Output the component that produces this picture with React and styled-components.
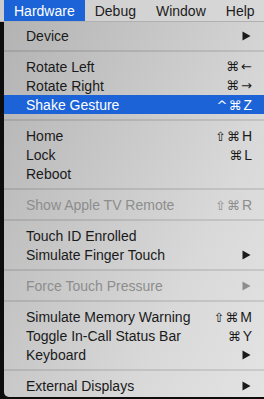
import React from "react";
import styled, { createGlobalStyle } from "styled-components";

const GlobalStyle = createGlobalStyle`
  html, body {
    margin: 0;
    padding: 0;
    background: #0d0d0d;
    overflow: hidden;
  }
  body {
    font-family: "Liberation Sans", Arial, "DejaVu Sans", sans-serif;
    -webkit-font-smoothing: antialiased;
  }
`;

const menuTitles = ["Hardware", "Debug", "Window", "Help"];

// null -> separator
const items = [
  { label: "Device", submenu: true },
  null,
  { label: "Rotate Left", mods: "⌘", key: "←" },
  { label: "Rotate Right", mods: "⌘", key: "→" },
  { label: "Shake Gesture", mods: "^⌘", key: "Z", active: true },
  null,
  { label: "Home", mods: "⇧⌘", key: "H" },
  { label: "Lock", mods: "⌘", key: "L" },
  { label: "Reboot" },
  null,
  { label: "Show Apple TV Remote", mods: "⇧⌘", key: "R", disabled: true },
  null,
  { label: "Touch ID Enrolled" },
  { label: "Simulate Finger Touch", submenu: true },
  null,
  { label: "Force Touch Pressure", submenu: true, disabled: true },
  null,
  { label: "Simulate Memory Warning", mods: "⇧⌘", key: "M" },
  { label: "Toggle In-Call Status Bar", mods: "⌘", key: "Y" },
  { label: "Keyboard", submenu: true },
  null,
  { label: "External Displays", submenu: true },
];

const isSymbol = (k) => k === "←" || k === "→";

function Arrow() {
  return (
    <ArrowIcon width="9" height="10" viewBox="0 0 9 10">
      <polygon points="0.5,0.5 8.5,5 0.5,9.5" fill="currentColor" />
    </ArrowIcon>
  );
}

export default function App() {
  return (
    <>
      <GlobalStyle />
      <Screen>
        <MenuBar>
          {menuTitles.map((t, i) => (
            <MenuTitle key={t} open={i === 0}>
              {t}
            </MenuTitle>
          ))}
        </MenuBar>

        <Dropdown>
          {items.map((item, i) =>
            item ? (
              <Item key={i} active={item.active} disabled={item.disabled}>
                <Label>{item.label}</Label>
                {item.key && (
                  <Shortcut>
                    <Mods>{item.mods}</Mods>
                    <Key symbol={isSymbol(item.key)}>{item.key}</Key>
                  </Shortcut>
                )}
                {item.submenu && <Arrow />}
              </Item>
            ) : (
              <Separator key={i} />
            )
          )}
        </Dropdown>
      </Screen>
    </>
  );
}

const Screen = styled.div`
  width: 264px;
  height: 399px;
  display: flex;
  flex-direction: column;
  background: #0d0d0d;
`;

const MenuBar = styled.div`
  display: flex;
  height: 22px;
  padding-left: 4px;
  background: linear-gradient(90deg, #cdcdcd, #d8d8d8);
  border-bottom: 1px solid #b0b0b0;
  box-sizing: border-box;
`;

const MenuTitle = styled.div`
  display: flex;
  align-items: center;
  padding: 0 10px;
  font-size: 14px;
  color: ${(p) => (p.open ? "#ffffff" : "#1c1c1c")};
  background: ${(p) => (p.open ? "#1c63d7" : "transparent")};
`;

const Dropdown = styled.div`
  margin-left: 4px;
  padding: 4px 0 2px;
  display: flex;
  flex-direction: column;
  border-bottom-left-radius: 5px;
  background: linear-gradient(115deg, #b3b3b3 0%, #c6c6c6 35%, #d9d9d9 70%, #e3e3e3 100%);
`;

const Item = styled.div`
  display: flex;
  align-items: center;
  height: 19px;
  padding: 0 12px 0 22px;
  font-size: 14px;
  color: ${(p) => (p.active ? "#ffffff" : p.disabled ? "#8d8d8d" : "#1a1a1a")};
  background: ${(p) => (p.active ? "#1c63d7" : "transparent")};
`;

const Label = styled.span`
  flex: 1;
  white-space: nowrap;
`;

const Shortcut = styled.span`
  display: flex;
  align-items: baseline;
  gap: 1px;
`;

const Mods = styled.span`
  font-family: "DejaVu Sans", sans-serif;
  font-size: 13px;
  letter-spacing: 1px;
`;

const Key = styled.span`
  font-family: ${(p) =>
    p.symbol ? `"DejaVu Sans", sans-serif` : `"Liberation Sans", sans-serif`};
  font-size: ${(p) => (p.symbol ? "13px" : "14px")};
`;

const ArrowIcon = styled.svg`
  display: block;
  margin-right: 1px;
`;

const Separator = styled.div`
  height: 2px;
  margin: 5px 0;
  background: rgba(0, 0, 0, 0.1);
`;
